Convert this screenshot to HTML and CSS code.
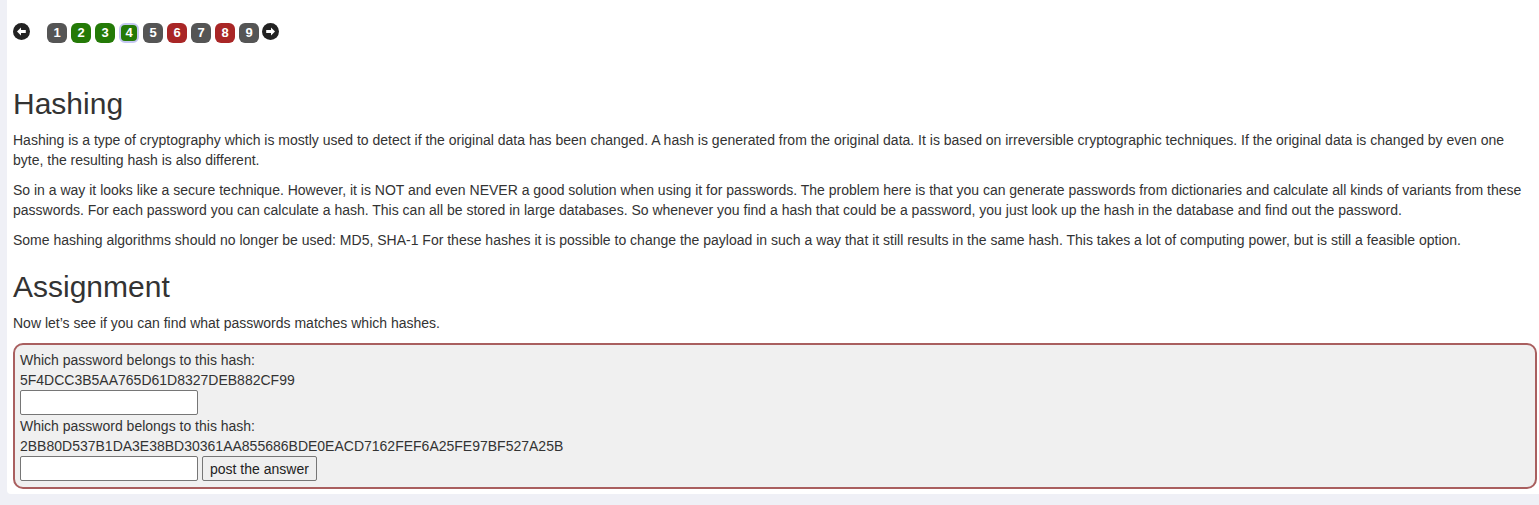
FILE: index.html
```html
<!DOCTYPE html>
<html>
<head>
<meta charset="utf-8">
<link rel="stylesheet" href="styles.css">
</head>
<body>
<div class="panel">
  <div class="pager">
    <span class="arrow arrow-left">
      <svg width="17" height="17" viewBox="0 0 17 17"><circle cx="8.5" cy="8.5" r="8.5" fill="#222"/><path d="M4 8.5 L8 4.6 L8 7 L12.8 7 L12.8 10 L8 10 L8 12.4 Z" fill="#fff"/></svg>
    </span>
    <div class="pages">
      <span class="pg gray">1</span>
      <span class="pg green">2</span>
      <span class="pg green">3</span>
      <span class="pg green current">4</span>
      <span class="pg gray">5</span>
      <span class="pg red">6</span>
      <span class="pg gray">7</span>
      <span class="pg red">8</span>
      <span class="pg gray">9</span>
    </div>
    <span class="arrow arrow-right">
      <svg width="17" height="17" viewBox="0 0 17 17"><circle cx="8.5" cy="8.5" r="8.5" fill="#222"/><path d="M13 8.5 L9 4.6 L9 7 L4.2 7 L4.2 10 L9 10 L9 12.4 Z" fill="#fff"/></svg>
    </span>
  </div>

  <h2>Hashing</h2>
  <p>Hashing is a type of cryptography which is mostly used to detect if the original data has been changed. A hash is generated from the original data. It is based on irreversible cryptographic techniques. If the original data is changed by even one byte, the resulting hash is also different.</p>
  <p>So in a way it looks like a secure technique. However, it is NOT and even NEVER a good solution when using it for passwords. The problem here is that you can generate passwords from dictionaries and calculate all kinds of variants from these passwords. For each password you can calculate a hash. This can all be stored in large databases. So whenever you find a hash that could be a password, you just look up the hash in the database and find out the password.</p>
  <p>Some hashing algorithms should no longer be used: MD5, SHA-1 For these hashes it is possible to change the payload in such a way that it still results in the same hash. This takes a lot of computing power, but is still a feasible option.</p>

  <h2>Assignment</h2>
  <p>Now let’s see if you can find what passwords matches which hashes.</p>

  <form class="assignment">
    <div class="line">Which password belongs to this hash:</div>
    <div class="line">5F4DCC3B5AA765D61D8327DEB882CF99</div>
    <div class="row"><input type="text" class="field"></div>
    <div class="line">Which password belongs to this hash:</div>
    <div class="line">2BB80D537B1DA3E38BD30361AA855686BDE0EACD7162FEF6A25FE97BF527A25B</div>
    <div class="row"><input type="text" class="field"><button type="button" class="btn">post the answer</button></div>
  </form>
</div>
</body>
</html>
```

FILE: styles.css
```css
html, body {
  margin: 0;
  padding: 0;
}
body {
  background: #eff0f6;
  font-family: "Liberation Sans", Arial, Helvetica, sans-serif;
  font-size: 14px;
  line-height: 20px;
  color: #333;
  height: 505px;
  overflow: hidden;
}
.panel {
  margin-left: 7px;
  width: 1524px;
  background: #fff;
  padding: 23px 6px 5px 6px;
  border-radius: 0 0 4px 4px;
}
.pager {
  display: flex;
  align-items: flex-start;
  height: 20px;
  margin-bottom: 44px;
}
.arrow {
  display: block;
  width: 17px;
  height: 17px;
}
.arrow svg {
  display: block;
}
.pages {
  display: flex;
  gap: 4px;
  margin-left: 17px;
  margin-right: 3px;
}
.pg {
  display: flex;
  align-items: center;
  justify-content: center;
  width: 20px;
  height: 20px;
  box-sizing: border-box;
  border-radius: 6px;
  color: #fff;
  font-weight: bold;
  font-size: 13px;
  line-height: 20px;
}
.gray { background: #555; }
.green { background: #247a07; }
.red { background: #a92626; }
.current {
  border: 2px solid #c4c7f2;
}
h2 {
  font-family: "Liberation Sans", Arial, Helvetica, sans-serif;
  font-weight: 500;
  font-size: 30px;
  line-height: 33px;
  margin: 20px 0 10px;
  color: #333;
}
p {
  margin: 0 0 10px;
}
.assignment {
  margin: 0;
  border: 2px solid #a95f5f;
  border-radius: 10px;
  background: #f0f0f0;
  padding: 5px 5px 5px 5px;
}
.line {
  height: 20px;
  line-height: 20px;
}
.row {
  display: flex;
  gap: 4px;
  padding: 0 0 1px 0;
  height: 25px;
}
.field {
  width: 178px;
  height: 25px;
  box-sizing: border-box;
  border: 1px solid #767676;
  border-radius: 2px;
  background: #fff;
  margin: 0;
  padding: 1px 2px;
  font-family: "Liberation Sans", Arial, sans-serif;
  font-size: 13px;
}
.btn {
  height: 25px;
  box-sizing: border-box;
  border: 1px solid #767676;
  border-radius: 2px;
  background: #efefef;
  margin: 0;
  padding: 1px 7px;
  font-family: "Liberation Sans", Arial, sans-serif;
  font-size: 14px;
  color: #222;
}
```
